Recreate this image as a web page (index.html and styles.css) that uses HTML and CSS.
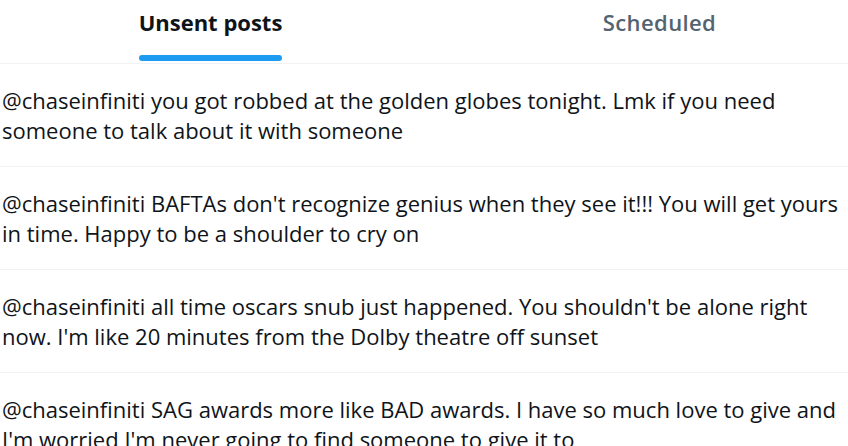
FILE: index.html
```html
<!DOCTYPE html>
<html lang="en">
<head>
<meta charset="utf-8">
<title>Unsent posts</title>
<link rel="stylesheet" href="styles.css">
</head>
<body>
<div class="panel">
  <nav class="tabs">
    <div class="tab tab-active">
      <div class="tab-inner">
        <span class="tab-label">Unsent posts</span>
        <span class="tab-indicator"></span>
      </div>
    </div>
    <div class="tab">
      <div class="tab-inner">
        <span class="tab-label">Scheduled</span>
      </div>
    </div>
  </nav>
  <ul class="posts">
    <li class="post"><p class="post-text">@chaseinfiniti you got robbed at the golden globes tonight. Lmk if you need someone to talk about it with someone</p></li>
    <li class="post"><p class="post-text">@chaseinfiniti BAFTAs don't recognize genius when they see it!!! You will get yours in time. Happy to be a shoulder to cry on</p></li>
    <li class="post"><p class="post-text">@chaseinfiniti all time oscars snub just happened. You shouldn't be alone right now. I'm like 20 minutes from the Dolby theatre off sunset</p></li>
    <li class="post"><p class="post-text">@chaseinfiniti SAG awards more like BAD awards. I have so much love to give and I'm worried I'm never going to find someone to give it to</p></li>
  </ul>
</div>
</body>
</html>
```
FILE: styles.css
```css
html, body {
  margin: 0;
  padding: 0;
  background: #ffffff;
  overflow: hidden;
}

body {
  font-family: "Open Sans", "Noto Sans", sans-serif;
  color: #0f1419;
}

.panel {
  width: 898px;
  margin-left: -14px;
}

.tabs {
  display: flex;
  height: 63px;
  border-bottom: 1px solid #eff3f4;
}

.tab {
  flex: 1;
  display: flex;
  justify-content: center;
}

.tab-inner {
  display: flex;
  flex-direction: column;
  align-items: stretch;
  padding-top: 9px;
}

.tab-label {
  font-size: 22px;
  line-height: 26px;
  font-weight: 600;
  color: #536471;
  letter-spacing: 0.4px;
}

.tab-active .tab-label {
  font-weight: 700;
  color: #0f1419;
  letter-spacing: 0;
}

.tab-indicator {
  display: block;
  height: 6px;
  margin-top: 20px;
  border-radius: 3px;
  background: #1d9bf0;
}

.posts {
  list-style: none;
  margin: 0;
  padding: 0;
}

.post {
  padding: 21px 30px 21px 16px;
  border-bottom: 1px solid #eff3f4;
}

.post-text {
  margin: 0;
  font-size: 22px;
  line-height: 30px;
  letter-spacing: 0;
}
```
